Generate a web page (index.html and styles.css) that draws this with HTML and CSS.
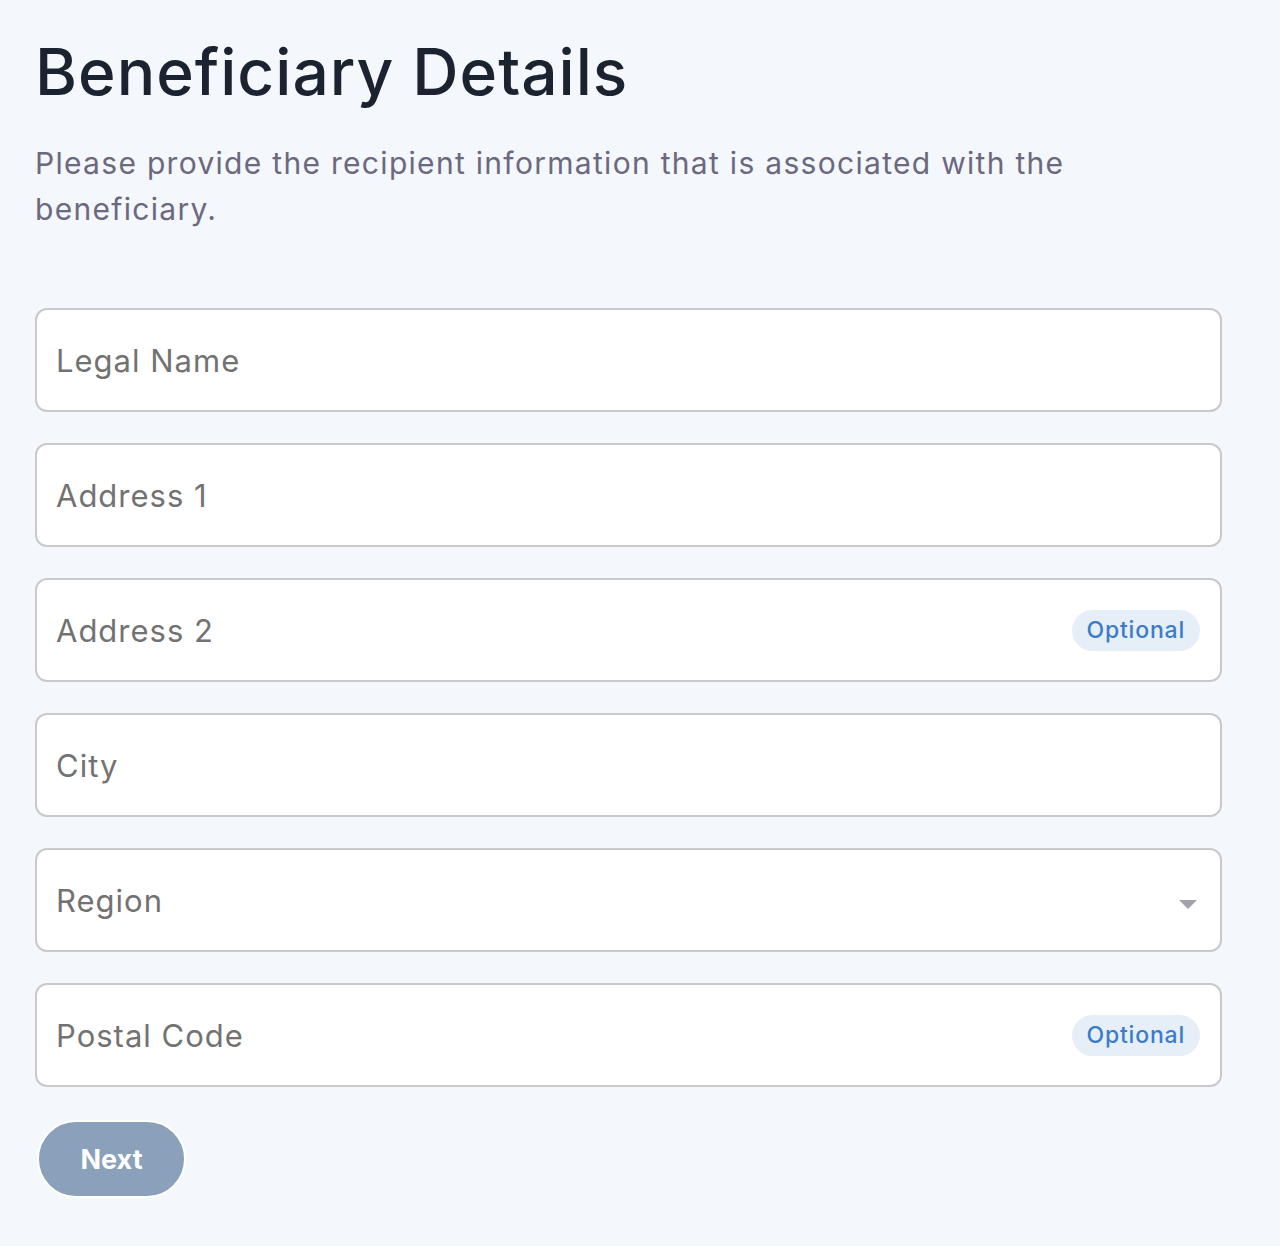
FILE: index.html
```html
<!DOCTYPE html>
<html lang="en">
<head>
<meta charset="utf-8">
<title>Beneficiary Details</title>
<link rel="stylesheet" href="styles.css">
</head>
<body>
<main class="page">
  <h1 class="title">Beneficiary Details</h1>
  <p class="subtitle">Please provide the recipient information that is associated with the beneficiary.</p>
  <form class="form">
    <label class="field"><input class="field-input" type="text" placeholder="Legal Name"></label>
    <label class="field"><input class="field-input" type="text" placeholder="Address 1"></label>
    <label class="field"><input class="field-input" type="text" placeholder="Address 2"><span class="badge">Optional</span></label>
    <label class="field"><input class="field-input" type="text" placeholder="City"></label>
    <label class="field field-select"><span class="select-text">Region</span><svg class="caret" width="18" height="9" viewBox="0 0 18 9"><path d="M0 0 L18 0 L9 9 Z" fill="#a3a1b0"/></svg></label>
    <label class="field"><input class="field-input" type="text" placeholder="Postal Code"><span class="badge">Optional</span></label>
    <div class="actions"><button class="btn" type="button">Next</button></div>
  </form>
</main>
</body>
</html>
```
FILE: styles.css
```css
* { box-sizing: border-box; }
html, body { margin: 0; padding: 0; background: #f4f7fb; }
body { font-family: Inter, "Noto Sans", sans-serif; }
.page { padding: 30px 58px 40px 35px; width: 1280px; }
.title {
  margin: 0;
  font-size: 64px;
  font-weight: 500;
  color: #1b2330;
  line-height: 84px;
  letter-spacing: 1px;
}
.subtitle {
  margin: 26px 0 0 0;
  font-size: 30px;
  line-height: 46px;
  color: #6b6880;
  letter-spacing: 1.3px;
  width: 1120px;
}
.form { margin-top: 76px; display: flex; flex-direction: column; gap: 31px; }
.field {
  display: flex;
  align-items: center;
  height: 104px;
  background: #fff;
  border: 2px solid #c9c9cc;
  border-radius: 12px;
  padding: 0 20px 0 19px;
}
.field-input {
  flex: 1;
  border: 0;
  outline: 0;
  background: transparent;
  font-family: inherit;
  font-size: 31px;
  letter-spacing: 1px;
  color: #333;
  padding: 0;
  min-width: 0;
}
.field-input::placeholder { color: #727272; opacity: 1; }
.select-text { flex: 1; font-size: 31px; letter-spacing: 1px; color: #727272; }
.caret { margin-right: 3px; margin-top: 8px; }
.badge {
  display: inline-flex;
  align-items: center;
  height: 41px;
  padding: 0 15px;
  border-radius: 21px;
  background: #e6eef8;
  color: #3b7cc9;
  font-size: 23px;
  font-weight: 500;
  letter-spacing: 0.8px;
}
.actions { margin-top: 2px; }
.btn {
  margin-left: 2px;
  width: 149px;
  height: 78px;
  border-radius: 39px;
  border: 2px solid #ffffff;
  background: #8aa0bb;
  color: #fff;
  font-family: inherit;
  font-size: 27px;
  font-weight: 700;
  cursor: pointer;
}
```
